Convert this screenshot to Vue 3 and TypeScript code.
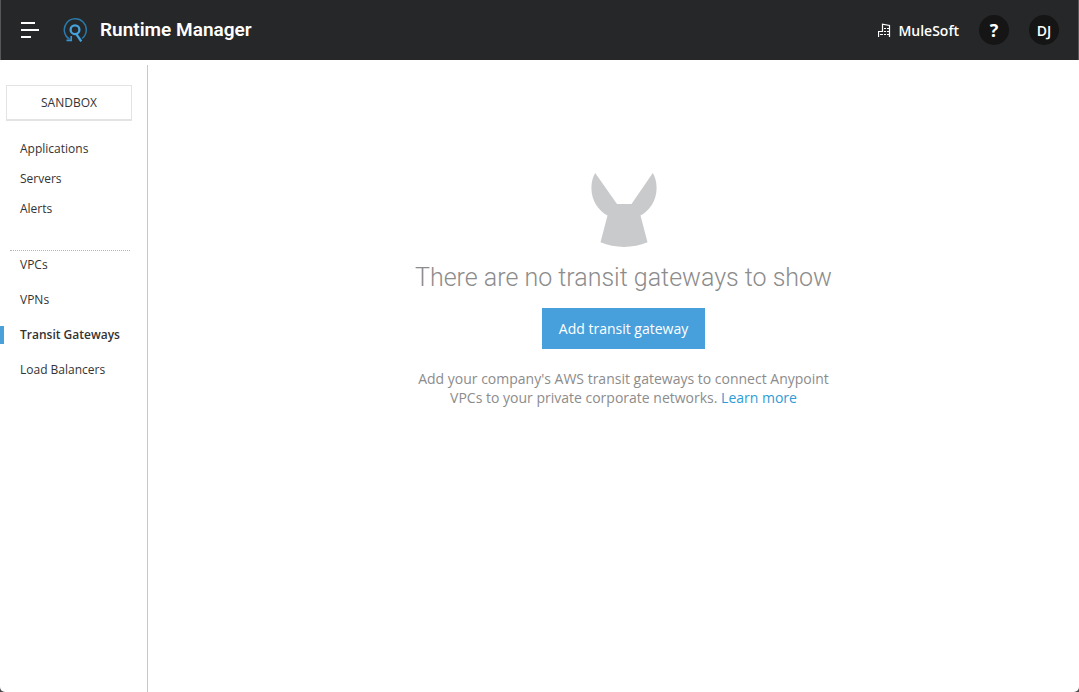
<script setup lang="ts">
interface NavItem {
  label: string
  active?: boolean
}

const resources: NavItem[] = [{ label: 'Applications' }, { label: 'Servers' }, { label: 'Alerts' }]

const network: NavItem[] = [
  { label: 'VPCs' },
  { label: 'VPNs' },
  { label: 'Transit Gateways', active: true },
  { label: 'Load Balancers' },
]
</script>

<template>
  <div class="page">
    <header class="topbar">
      <button class="menu" type="button" aria-label="Open menu">
        <svg width="18" height="16" viewBox="0 0 18 16" fill="#fff">
          <rect x="0" y="0" width="14" height="2" />
          <rect x="0" y="7" width="18" height="2" />
          <rect x="0" y="14" width="10" height="2" />
        </svg>
      </button>
      <svg class="logo" width="24" height="24" viewBox="0 0 24 24" fill="none">
        <path d="M6.6 21.2A11 11 0 1 1 19 20.5" stroke="#2b79a8" stroke-width="1.5" />
        <path d="M3.5 22.3H8.2V18" stroke="#3b94cf" stroke-width="1.7" />
        <circle cx="12" cy="11.7" r="4.4" stroke="#46a2dd" stroke-width="2.3" />
        <path d="M13.2 15.8L18.3 23.4" stroke="#46a2dd" stroke-width="2.3" />
      </svg>
      <h1 class="title">Runtime Manager</h1>
      <div class="account">
        <button class="org" type="button">
          <svg width="13" height="15" viewBox="0 0 13 15" fill="none" stroke="#fff">
            <path d="M.5 14V8.5H4.5M4.5 9V1.2L11.5 2.5V14" stroke-width="1.2" />
            <path d="M6 5.5H8M9 5.5H11M6 8.5H8M9 8.5H11M2 11.5H5M6 11.5H8M9 11.5H11" />
          </svg>
          <span>MuleSoft</span>
        </button>
        <button class="round help" type="button" aria-label="Help">?</button>
        <button class="round" type="button" aria-label="User profile">DJ</button>
      </div>
    </header>

    <div class="body">
      <aside class="sidebar">
        <button class="environment" type="button">SANDBOX</button>
        <nav>
          <ul class="group resources">
            <li v-for="item in resources" :key="item.label">
              <a href="#">{{ item.label }}</a>
            </li>
          </ul>
          <hr class="divider" />
          <ul class="group network">
            <li v-for="item in network" :key="item.label">
              <a href="#" :class="{ active: item.active }">{{ item.label }}</a>
            </li>
          </ul>
        </nav>
      </aside>

      <main class="content">
        <svg class="mule" width="66" height="76" viewBox="0 0 66 76" aria-hidden="true">
          <path
            d="M4.2 1L26 32H40.5L61.8 1C64 4.5 65.6 9.5 65.6 16C65.6 28 59 38.500 49.500 43.500L56.500 70.300C42 76.500 24 76.500 9.500 70.300L16.500 43.500C7 38.500.4 28 .4 16C.4 9.500 2 4.500 4.200 1Z"
            fill="#c9cacc"
          />
        </svg>
        <h2 class="heading">There are no transit gateways to show</h2>
        <button class="primary" type="button">Add transit gateway</button>
        <p class="description">
          Add your company's AWS transit gateways to connect Anypoint VPCs to your private corporate
          networks. <a href="#">Learn more</a>
        </p>
      </main>
    </div>
  </div>
</template>

<style>
html {
  background: #4a4a4c;
}

body {
  margin: 0;
}
</style>

<style scoped>
.page {
  display: flex;
  flex-direction: column;
  box-sizing: border-box;
  min-height: 100vh;
  overflow: hidden;
  border-radius: 0 0 5px 5px;
  background: #fff;
  color: #333;
  font-family: 'Open Sans', 'Noto Sans', sans-serif;
  font-size: 12px;
}

button {
  padding: 0;
  border: 0;
  background: none;
  color: inherit;
  font: inherit;
  cursor: pointer;
}

a {
  color: inherit;
  text-decoration: none;
}

.topbar {
  display: flex;
  align-items: center;
  box-sizing: border-box;
  height: 60px;
  padding: 0 19px 0 20px;
  border: solid #57585a;
  border-width: 0 1px;
  background: #262729;
  color: #fff;
}

.menu,
.logo,
.org svg {
  display: block;
  flex: none;
}

.menu svg {
  display: block;
}

.logo {
  margin-left: 24px;
}

.title {
  margin: 0 0 0 13px;
  font-family: Roboto, sans-serif;
  font-size: 19px;
  font-weight: 600;
  line-height: 24px;
}

.account {
  display: flex;
  align-items: center;
  gap: 20px;
  margin-left: auto;
}

.org {
  display: flex;
  align-items: center;
  gap: 7px;
  font-size: 14px;
  font-weight: 600;
}

.round {
  width: 30px;
  height: 30px;
  border-radius: 50%;
  background: #141514;
  font-size: 14px;
  font-weight: 600;
}

.help {
  font-size: 18px;
  font-weight: 700;
}

.body {
  display: flex;
  flex: 1;
  padding-top: 5px;
}

.sidebar {
  box-sizing: border-box;
  flex: none;
  width: 148px;
  padding-top: 20px;
  border-right: 1px solid #c8c8c8;
}

.environment {
  display: block;
  box-sizing: border-box;
  width: 126px;
  height: 36px;
  margin-left: 6px;
  border: 1px solid #e3e3e3;
  border-bottom-width: 2px;
}

.group {
  margin: 0;
  padding: 0;
  list-style: none;
}

.group a {
  display: block;
  padding-left: 20px;
  line-height: 18px;
}

.resources {
  display: grid;
  gap: 12px;
  padding: 19px 0 32px;
}

.divider {
  margin: 0 17px 5px 10px;
  border: 0;
  border-top: 1px dotted #b5b5b5;
}

.network {
  display: grid;
  gap: 17px;
}

.network .active {
  padding-left: 16px;
  border-left: 4px solid #4aa1da;
  font-weight: 600;
}

.content {
  display: flex;
  flex: 1;
  flex-direction: column;
  align-items: center;
  padding: 107px 24px 24px 44px;
}

.heading {
  margin: 13px 0;
  color: #8c8c8c;
  font-family: Roboto, sans-serif;
  font-size: 25px;
  font-weight: 300;
  line-height: 34px;
}

.primary {
  padding: 11px 17px;
  background: #479fdb;
  color: #fff;
  font-size: 14px;
  line-height: 19px;
}

.description {
  max-width: 440px;
  margin: 20px 0 0;
  color: #8c8c8c;
  font-size: 14px;
  font-weight: 500;
  line-height: 19px;
  text-align: center;
}

.description a {
  color: #2e9cd6;
}
</style>
